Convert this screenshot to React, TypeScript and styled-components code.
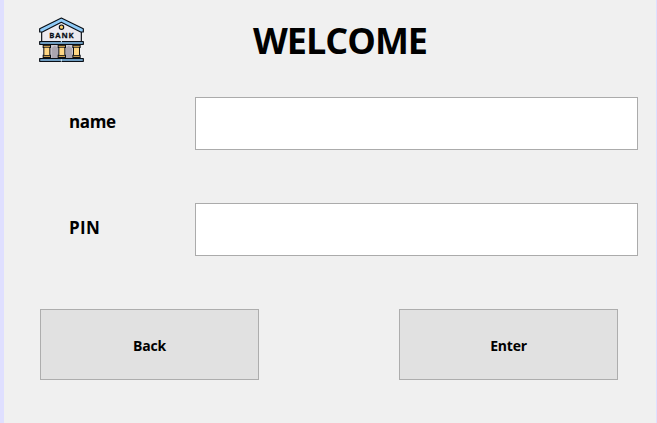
import React from "react";
import styled, { createGlobalStyle } from "styled-components";

const GlobalStyle = createGlobalStyle`
  * { box-sizing: border-box; }
  body { margin: 0; }
`;

const Window = styled.main`
  width: 657px;
  height: 423px;
  overflow: hidden;
  background: #f0f0f0;
  border-left: 4px solid #dfdfff;
  border-right: 1px solid #dfdfff;
  color: #000;
  font-family: "Open Sans", "Noto Sans", sans-serif;
  font-weight: 700;
`;

const Header = styled.header`
  display: flex;
  height: 97px;
  padding: 10px 0 0 28px;
`;

const Title = styled.h1`
  margin: 6px 0 0 161px;
  font-size: 36px;
  line-height: 49px;
  letter-spacing: -1px;
  font-weight: 700;
`;

const Form = styled.form`
  display: flex;
  flex-direction: column;
`;

const Field = styled.label`
  display: grid;
  grid-template-columns: 126px 443px;
  align-items: start;
  height: 53px;
  margin: 0 0 53px 65px;
`;

const LabelText = styled.span<{ $spacing: number }>`
  padding-top: 13px;
  font-size: 17px;
  line-height: 24px;
  letter-spacing: ${(p) => p.$spacing}px;
`;

const TextInput = styled.input`
  width: 443px;
  height: 53px;
  padding: 0 10px;
  border: 1px solid #ababab;
  border-radius: 0;
  background: #fff;
  font: inherit;
  outline: none;
`;

const Actions = styled.div`
  display: flex;
  gap: 140px;
  padding-left: 36px;
`;

const Button = styled.button`
  width: 219px;
  height: 71px;
  padding: 2px 0 0;
  border: 1px solid #adadad;
  border-radius: 0;
  background: #e1e1e1;
  color: #000;
  font: inherit;
  font-size: 14px;
  letter-spacing: -0.2px;
`;

const IconText = styled.text`
  font-family: "Open Sans", sans-serif;
  font-size: 23px;
  font-weight: 700;
`;

const Pillar = ({ x }: { x: number }) => (
  <g>
    <path d={`M${x} 104h25v10h-2v20h2v10h-25v-10h2v-20h-2z`} fill="#090e15" />
    <path d={`M${x + 5} 113h15v22h-15z`} fill="#ffd783" />
    <path d={`M${x + 3} 107h19v4h-19zM${x + 3} 137h19v4h-19z`} fill="#c79a4d" />
  </g>
);

const BankIcon = () => (
  <svg width="60" height="60" viewBox="0 0 180 180" role="img" aria-label="Bank">
    <path d="M29 60L88 33l60 27v36H29z" fill="#eceaf0" stroke="#090e15" strokeWidth="3.500" />
    <path
      d="M88 24L23 56v10h8l57-29 58 29h8V56z"
      fill="#8fcbf8"
      stroke="#090e15"
      strokeWidth="3.500"
      strokeLinejoin="round"
    />
    <circle cx="88.5" cy="51.500" r="6.500" fill="#ffd66e" stroke="#090e15" strokeWidth="3.500" />
    <IconText x="52" y="85" textLength="73" lengthAdjust="spacing" fill="#090e15" stroke="#090e15" strokeWidth="0.8">
      BANK
    </IconText>
    <path d="M34 104h109v42H34z" fill="#c9c5ce" />
    <path d="M59 146v-32l9-7 10 7v32zM101 146v-32l9-7 10 7v32z" fill="#aaa5b0" />
    <Pillar x={32} />
    <Pillar x={77} />
    <Pillar x={121} />
    <path
      d="M23 95h131v8H23zM23 146h131v8H23z"
      fill="#8fcbf8"
      stroke="#090e15"
      strokeWidth="3.500"
      strokeLinejoin="round"
    />
    <path d="M88 87v10M88 148v7" stroke="#d9eefc" strokeWidth="3" />
  </svg>
);

export default function App() {
  return (
    <>
      <GlobalStyle />
      <Window>
        <Header>
          <BankIcon />
          <Title>WELCOME</Title>
        </Header>
        <Form onSubmit={(e) => e.preventDefault()}>
          <Field>
            <LabelText $spacing={-0.4}>name</LabelText>
            <TextInput type="text" name="name" />
          </Field>
          <Field>
            <LabelText $spacing={0.3}>PIN</LabelText>
            <TextInput type="password" name="pin" />
          </Field>
          <Actions>
            <Button type="button">Back</Button>
            <Button type="submit">Enter</Button>
          </Actions>
        </Form>
      </Window>
    </>
  );
}
